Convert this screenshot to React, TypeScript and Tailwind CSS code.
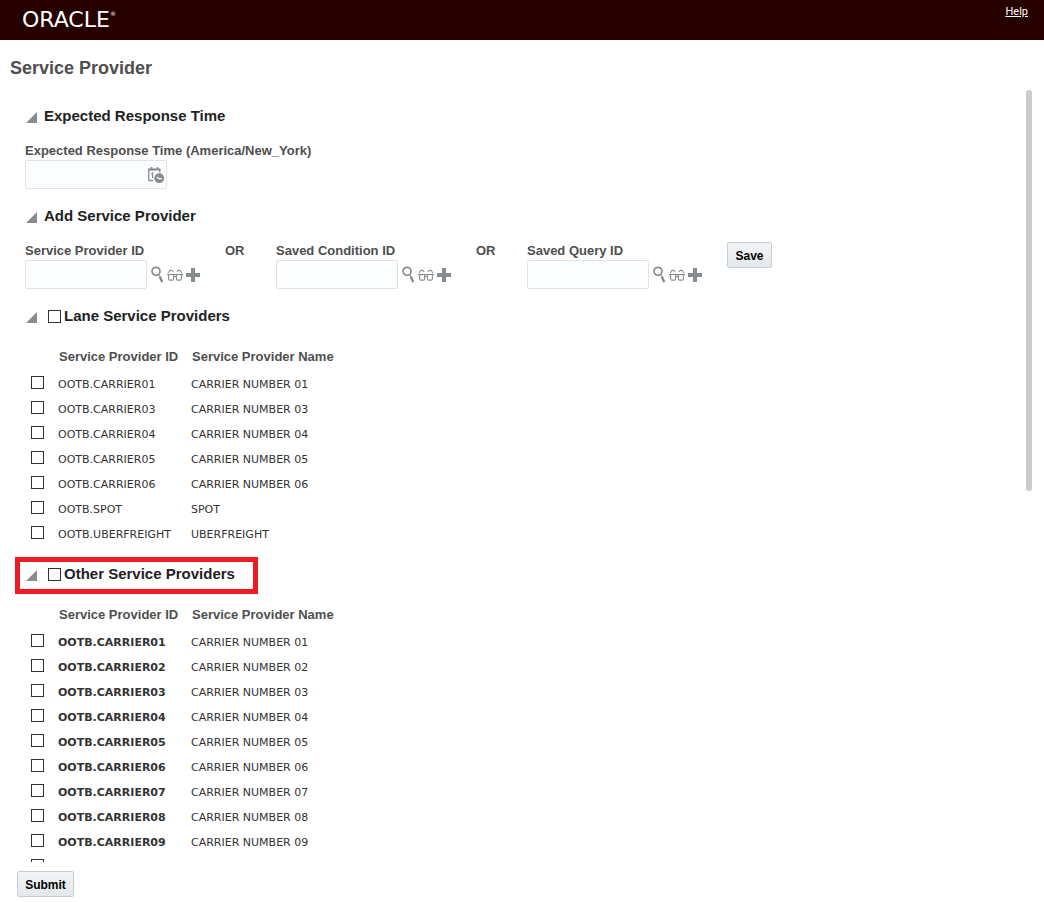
import { ReactElement, ReactNode, useState } from 'react'

interface Provider {
  id: string,
  name: string
}

const laneProviders: Provider[] = [
  { id: 'OOTB.CARRIER01', name: 'CARRIER NUMBER 01' },
  { id: 'OOTB.CARRIER03', name: 'CARRIER NUMBER 03' },
  { id: 'OOTB.CARRIER04', name: 'CARRIER NUMBER 04' },
  { id: 'OOTB.CARRIER05', name: 'CARRIER NUMBER 05' },
  { id: 'OOTB.CARRIER06', name: 'CARRIER NUMBER 06' },
  { id: 'OOTB.SPOT', name: 'SPOT' },
  { id: 'OOTB.UBERFREIGHT', name: 'UBERFREIGHT' },
]

const otherProviders: Provider[] = ['01', '02', '03', '04', '05', '06', '07', '08', '09', '10'].map(n => ({ id: `OOTB.CARRIER${n}`, name: `CARRIER NUMBER ${n}` }))

const checkboxClass = 'block size-[13px] shrink-0 appearance-none border border-[#333] bg-white checked:bg-[#333]'
const inputClass = 'h-[29px] rounded-xs border border-[#dfe4e7] bg-[#fcfdfe] px-1.5 text-xs text-[#333]'
const labelClass = 'block h-[18px] text-[13px] leading-[18px] font-bold text-[#4f4f4f]'
const buttonClass = 'h-[26px] rounded-xs border border-[#c4ced7] bg-linear-to-b from-[#f3f5f6] to-[#e3e8ec] pt-0.5 text-xs font-bold text-black'

const CalendarIcon = (): ReactElement => <svg width="17" height="17" viewBox="0 0 17 17" fill="none" stroke="#878c8f">
  <path d="M.75 13.5V2.5h11v3M.75 13.5H5" strokeWidth="1.3" />
  <path d="M0 2.5h12.4" strokeWidth="1.8" />
  <path d="M3.5 0v3M9.5 0v3" strokeWidth="1.6" />
  <path d="M3.3 7 4.6 6v5" strokeWidth="1.2" />
  <circle cx="11.2" cy="11.2" r="4.9" fill="#878c8f" stroke="none" />
  <path d="m8.8 10 2.2 1.6h2.8" stroke="#fff" strokeWidth="1.1" />
</svg>

const SearchIcon = (): ReactElement => <svg width="13" height="17" viewBox="0 0 13 17" fill="none" stroke="#878c8f">
  <circle cx="5" cy="5.3" r="4" strokeWidth="1.7" />
  <path d="M7.5 8.5 9 10.5" strokeWidth="1.2" />
  <path d="m8.8 10.5 2.4 5.6" strokeWidth="2.4" />
</svg>

const GlassesIcon = (): ReactElement => <svg width="16" height="12" viewBox="0 0 16 12" fill="none" stroke="#878c8f" strokeWidth="1.1">
  <path d="M0 5.5h16" />
  <path d="M1.6 5.5v4.2q0 1.4 1.4 1.4h2.2q1.4 0 1.4-1.4V5.5M9.4 5.5v4.2q0 1.4 1.4 1.4H13q1.4 0 1.4-1.4V5.5M6.6 7.5h2.8" />
  <path d="m1 4 1.6-2.2q.3-.4.8-.4h1q.4 0 .8.4l.8 1M15 4l-1.6-2.2q-.3-.4-.8-.4h-1q-.4 0-.8.4l-.8 1" />
</svg>

const PlusIcon = (): ReactElement => <svg width="14" height="14" viewBox="0 0 14 14" fill="#878c8f">
  <path d="M5 0h4v5h5v4H9v5H5V9H0V5h5z" />
</svg>

interface SectionProps {
  title: string,
  selectable?: boolean,
  highlighted?: boolean,
  children: ReactNode
}

const Section = ({ title, selectable, highlighted, children }: SectionProps): ReactElement => {
  const [open, setOpen] = useState(true)
  return <section>
    <div className="relative mb-2 flex h-9 items-center pl-[26px]">
      {highlighted && <div className="pointer-events-none absolute top-px left-[15px] h-[37px] w-[243px] border-5 border-[#ed1c24]" />}
      <button type="button" aria-label={`Toggle ${title}`} aria-expanded={open} className="mt-0.5 mr-[7px] shrink-0" onClick={() => setOpen(!open)}>
        <svg width="11" height="11" viewBox="0 0 11 11" className={open ? 'block' : 'block -rotate-45'}><path d="M11 0v11H0z" fill="#878c8f" /></svg>
      </button>
      {selectable
        ? <label className="flex items-center gap-[3px] pl-1 text-[15px] leading-5 font-bold text-[#222]"><input type="checkbox" className={checkboxClass} />{title}</label>
        : <h2 className="text-[15px] leading-5 font-bold text-[#222]">{title}</h2>}
    </div>
    {open && children}
  </section>
}

const LookupField = ({ id, label }: { id: string, label: string }): ReactElement => {
  return <div className="w-[200px] shrink-0">
    <label htmlFor={id} className={labelClass}>{label}</label>
    <div className="flex items-center">
      <input id={id} type="text" className={`${inputClass} mr-1 w-[122px]`} />
      <button type="button" aria-label="Find" className="mr-[3px]"><SearchIcon /></button>
      <button type="button" aria-label="View" className="mr-[3px]"><GlassesIcon /></button>
      <button type="button" aria-label="New"><PlusIcon /></button>
    </div>
  </div>
}

const ProviderTable = ({ providers, bold }: { providers: Provider[], bold?: boolean }): ReactElement => {
  return <table className="ml-[31px] border-collapse text-left">
    <thead>
      <tr className="h-[29px] text-[13px] leading-4 text-[#4f4f4f]">
        <th className="w-[27px]" />
        <th className="w-[133px] pl-px">Service Provider ID</th>
        <th className="pl-px">Service Provider Name</th>
      </tr>
    </thead>
    <tbody className="font-['DejaVu_Sans',sans-serif] text-[11px] leading-4 text-[#333]">
      {providers.map(({ id, name }) => <tr key={id} className="h-[25px]">
        <td className="pb-0.5"><input type="checkbox" aria-label={id} className={checkboxClass} /></td>
        <td className={bold ? 'pt-0.5 font-bold' : 'pt-0.5'}>{id}</td>
        <td className="pt-0.5">{name}</td>
      </tr>)}
    </tbody>
  </table>
}

export default function App(): ReactElement {
  return <div className="flex h-screen flex-col bg-white font-['Liberation_Sans',Arial,sans-serif]">
    <header className="flex h-10 shrink-0 items-center justify-between bg-[#270000] pr-4 pl-[22px] text-white">
      <div className="flex items-start font-['DejaVu_Sans',sans-serif] text-[22px] leading-6">ORACLE<span className="text-[6px] leading-3">®</span></div>
      <a href="#help" className="mb-4 font-[Roboto,sans-serif] text-[11px] leading-4 underline">Help</a>
    </header>
    <h1 className="h-[50px] shrink-0 px-2.5 pt-4 text-lg leading-6 font-bold text-[#4f4f4f]">Service Provider</h1>
    <div className="relative min-h-0 flex-1">
      <main className="h-full overflow-y-auto pt-2 [scrollbar-width:none]">
        <Section title="Expected Response Time">
          <div className="pb-[9px] pl-[25px]">
            <label htmlFor="response-time" className={labelClass}>Expected Response Time (America/New_York)</label>
            <div className="relative w-[142px]">
              <input id="response-time" type="text" className={`${inputClass} block w-full pr-6`} />
              <button type="button" aria-label="Pick date and time" className="absolute top-[7px] right-0.5"><CalendarIcon /></button>
            </div>
          </div>
        </Section>
        <Section title="Add Service Provider">
          <div className="flex items-start pb-[9px] pl-[25px]">
            <LookupField id="provider-id" label="Service Provider ID" />
            <span className={`${labelClass} w-[51px]`}>OR</span>
            <LookupField id="condition-id" label="Saved Condition ID" />
            <span className={`${labelClass} w-[51px]`}>OR</span>
            <LookupField id="query-id" label="Saved Query ID" />
            <button type="button" className={`${buttonClass} w-[45px]`}>Save</button>
          </div>
        </Section>
        <Section title="Lane Service Providers" selectable>
          <div className="pb-2.5"><ProviderTable providers={laneProviders} /></div>
        </Section>
        <Section title="Other Service Providers" selectable highlighted>
          <ProviderTable providers={otherProviders} bold />
        </Section>
      </main>
      <div className="absolute top-0 right-3 h-[52%] w-1.5 rounded-full bg-[#cbcbcb]" />
    </div>
    <footer className="h-10 shrink-0 px-[17px] pt-[9px]">
      <button type="submit" className={`${buttonClass} w-[57px]`}>Submit</button>
    </footer>
  </div>
}
